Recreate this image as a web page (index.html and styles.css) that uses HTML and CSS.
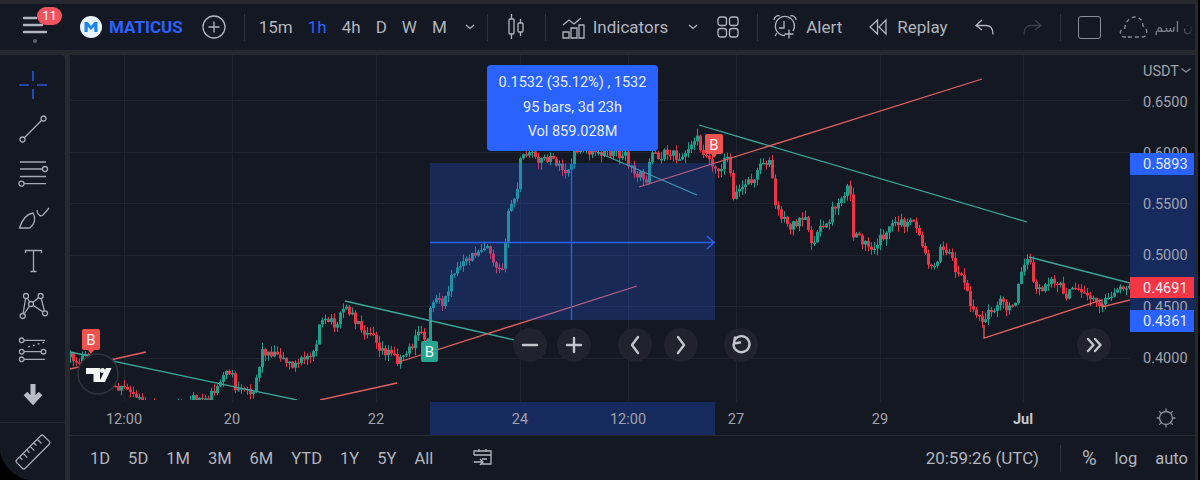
FILE: index.html
```html
<!DOCTYPE html>
<html lang="en">
<head>
  <meta charset="UTF-8">
  <meta name="viewport" content="width=device-width, initial-scale=1.0">
  <title>MATICUS Chart</title>
  <link rel="stylesheet" href="styles.css">
</head>
<body>
<div class="app">
  <header class="topbar">
    <div class="menu">
      <svg class="menu-icon" width="30" height="34" viewBox="0 0 30 34"><path d="M2 3h12M2 10h18M2 17h22" /><circle cx="13" cy="26" r="2" /></svg>
      <span class="badge">11</span>
    </div>
    <div class="symbol">
      <svg width="22" height="22" viewBox="0 0 22 22"><circle cx="11" cy="11" r="11" fill="#e9f1fb" /><path d="M4.5 16V6h3.2L11 10l3.3-4h3.2v10h-3.2V10.5L11 14l-3.300-3.500V16z" fill="#1c86e6" /></svg>
      <span class="symbol-name">MATICUS</span>
    </div>
    <svg class="icon plus" width="24" height="24" viewBox="0 0 24 24"><circle cx="12" cy="12" r="11" /><path d="M12 6.500v11M6.500 12h11" /></svg>
    <span class="sep first-sep"></span>
    <div class="intervals">
      <span>15m</span>
      <span class="active">1h</span>
      <span>4h</span>
      <span>D</span>
      <span>W</span>
      <span>M</span>
    </div>
    <svg class="icon chev interval-chev" width="12" height="8" viewBox="0 0 12 8"><path d="M2 2l4 3.500L10 2" /></svg>
    <span class="sep chev-sep"></span>
    <svg class="icon candle-icon" width="20" height="28" viewBox="0 0 20 28"><rect x="3" y="6" width="5" height="15" rx="1" /><path d="M5.500 1v5M5.500 21v5M14.500 6v4M14.500 19v4" /><rect x="12" y="10" width="5" height="9" rx="1" /></svg>
    <span class="sep candle-sep"></span>
    <svg class="icon ind-icon" width="24" height="24" viewBox="0 0 24 24"><path d="M1 10l6-5 5 4 7-6M1 23v-6h6v6zM9 23V13h6v10zM17 23V10h5v13z" /></svg>
    <span class="tb-text ind-text">Indicators</span>
    <svg class="icon chev ind-chev" width="12" height="8" viewBox="0 0 12 8"><path d="M2 2l4 3.500L10 2" /></svg>
    <svg class="icon grid-icon" width="22" height="22" viewBox="0 0 22 22"><rect x="1" y="1" width="8.500" height="8.500" rx="2.500" /><rect x="12.500" y="1" width="8.500" height="8.500" rx="2.500" /><rect x="1" y="12.500" width="8.500" height="8.500" rx="2.500" /><rect x="12.500" y="12.500" width="8.500" height="8.500" rx="2.500" /></svg>
    <span class="sep grid-sep"></span>
    <svg class="icon alert-icon" width="26" height="26" viewBox="0 0 26 26"><path d="M13 21.500a9.500 9.500 0 1 1 8-4.500M12 7v7H7M2 6c0-3 3-5 6-4M24 6c0-3-3-5-6-4M5 19l-2 3M17 24.500v-9M12.500 20h9" /></svg>
    <span class="tb-text alert-text">Alert</span>
    <svg class="icon replay-icon" width="20" height="20" viewBox="0 0 20 20"><path d="M9.500 3L2 10l7.500 7zM18 3l-7 7 7 7z" /></svg>
    <span class="tb-text replay-text">Replay</span>
    <svg class="icon undo" width="22" height="20" viewBox="0 0 22 20"><path d="M8 3L2 8.500 8 13M2 8.500h10c4 0 7 3 7 9" /></svg>
    <svg class="icon redo" width="22" height="20" viewBox="0 0 22 20"><path d="M14 3l6 5.500L14 13M20 8.500H10c-4 0-7 3-7 9" /></svg>
    <span class="sep redo-sep"></span>
    <span class="square"></span>
    <svg class="icon cloud" width="30" height="24" viewBox="0 0 30 24"><path d="M7 22H5c-5-1-5-8 1-9 0-7 6-11 10-11s8 3 8 9c5 2 5 10 0 11z" stroke-dasharray="4 3" /></svg>
    <div class="layout-name"><span dir="rtl">بدون اسم</span></div>
  </header>

  <div class="main">
    <nav class="sidebar">
      <div class="tool crosshair"><svg width="30" height="30" viewBox="0 0 30 30"><path d="M15 1v10M15 19v10M1 15h10M19 15h10" /></svg></div>
      <div class="tool"><svg width="30" height="30" viewBox="0 0 30 30"><circle cx="4.500" cy="25.500" r="2.500" /><circle cx="25.500" cy="4.500" r="2.500" /><path d="M6.300 23.700L23.700 6.300" /></svg></div>
      <div class="tool"><svg width="30" height="30" viewBox="0 0 30 30"><path d="M2 4h26M2 11h22M2 18.500h26M6 25.700h22" /><circle cx="27" cy="11" r="2.500" /><circle cx="3.500" cy="25.700" r="2.500" /></svg></div>
      <div class="tool"><svg width="30" height="30" viewBox="0 0 30 30"><path d="M1.500 26C4 18 9 12 15 11c3 5 2 11-3 15zM19 8c0 5 4 7 6 5l6-7" /></svg></div>
      <div class="tool"><svg width="30" height="30" viewBox="0 0 30 30"><path d="M7.500 7V4.500h16V7M15.500 4.500v21M12.500 25.500h6" /></svg></div>
      <div class="tool"><svg width="30" height="30" viewBox="0 0 30 30"><path d="M4.700 26L8 6l5 8 9.600-8L27 23.300 13 14 4.700 26" /><circle class="dot" cx="4.700" cy="26" r="2.500" /><circle class="dot" cx="8" cy="6" r="2.500" /><circle class="dot" cx="22.600" cy="6" r="2.500" /><circle class="dot" cx="27" cy="23.300" r="2.500" /><circle class="dot" cx="13" cy="14" r="2.500" /></svg></div>
      <div class="tool"><svg width="30" height="30" viewBox="0 0 30 30"><path d="M6 6.300h21M6 17.700h18M6 25.300h21" /><path d="M10 13l17-5" stroke-dasharray="2 3" /><circle cx="3.700" cy="6.300" r="2.300" /><circle cx="3.700" cy="17.700" r="2.300" /><circle cx="3.700" cy="25.300" r="2.300" /><circle cx="25.500" cy="17.700" r="2.300" /></svg></div>
      <div class="tool arrow"><svg width="30" height="30" viewBox="0 0 30 30"><path d="M15 6v16M7.500 15.500l7.500 8 7.500-8" /></svg></div>
      <div class="tool ruler"><svg width="30" height="30" viewBox="0 0 30 30"><g transform="rotate(-45 15 15)"><rect x="-4" y="9" width="38" height="12" rx="2" /><path d="M2 9v4M7 9v6M12 9v4M17 9v6M22 9v4M27 9v6" /></g></svg></div>
    </nav>

    <div class="content">
      <div class="chart">
        <svg class="chart-svg" width="1125" height="380" viewBox="70 55 1125 380">
          <defs>
            <clipPath id="pane"><rect x="70" y="55" width="1060" height="345" /></clipPath>
          </defs>
          <path class="grid" d="M70 100h1060M70 152h1060M70 203h1060M70 255h1060M70 306h1060M70 358h1060M124 55v347M232 55v347M376 55v347M520 55v347M628 55v347M736 55v347M880 55v347M1023 55v347" />
          <g id="candles" clip-path="url(#pane)"></g>
          <g clip-path="url(#pane)">
            <path class="trend-teal" d="M70 352L297 400M345 301L523 342M597 152L697 195M699 125L1027 222M1029 257L1130 283" />
            <path class="trend-red" d="M70 369L146 352M320 400L397 383M399 362L637 286M639 187L982 79M984 325V338L1102 300V307L1130 300" />
          </g>
          <rect class="sel" x="430" y="163" width="285" height="157" />
          <path class="sel-line" d="M571.500 163v157M430 242.500h284M707 236l7 6.500-7 6.500" />

          <!-- axis selection -->
          <rect class="axis-sel" x="430" y="402" width="285" height="33" />
          <rect class="axis-sel" x="1130" y="175" width="65" height="135" />

          <!-- time axis -->
          <g class="axis-text" text-anchor="middle">
            <text x="124" y="424">12:00</text>
            <text x="232" y="424">20</text>
            <text x="376" y="424">22</text>
            <text x="520" y="424">24</text>
            <text x="628" y="424">12:00</text>
            <text x="736" y="424">27</text>
            <text x="880" y="424">29</text>
            <text class="bold" x="1023" y="424">Jul</text>
          </g>

          <!-- price axis -->
          <g class="axis-text">
            <text x="1143" y="76">USDT</text>
            <text x="1143" y="107">0.6500</text>
            <text x="1143" y="158">0.6000</text>
            <text x="1143" y="209">0.5500</text>
            <text x="1143" y="260">0.5000</text>
            <text x="1143" y="312">0.4500</text>
            <text x="1143" y="363">0.4000</text>
          </g>
          <path class="btn-icon thin" d="M1182 69l4 3 4-3" />
          <rect class="price-blue" x="1130" y="153" width="64" height="22" />
          <rect class="price-blue" x="1130" y="310" width="64" height="22" />
          <rect class="price-red" x="1130" y="277" width="64" height="21" />
          <g class="price-text">
            <text x="1143" y="169">0.5893</text>
            <text x="1143" y="293">0.4691</text>
            <text x="1143" y="326">0.4361</text>
          </g>

          <!-- sun -->
          <g class="btn-icon thin">
            <circle cx="1166" cy="418" r="6.500" />
            <path d="M1166 409v2.500M1166 424.500v2.500M1157 418h2.500M1172.500 418h2.500M1159.600 411.600l1.800 1.800M1170.600 422.600l1.800 1.800M1172.400 411.600l-1.800 1.800M1161.400 422.600l-1.800 1.800" />
          </g>

          <!-- signal markers -->
          <path class="mark-red" d="M84 329h14a2 2 0 0 1 2 2v17a2 2 0 0 1-2 2h-4l-3 4-3-4h-4a2 2 0 0 1-2-2v-17a2 2 0 0 1 2-2z" />
          <path class="mark-red" d="M707 134h14a2 2 0 0 1 2 2v16a2 2 0 0 1-2 2h-4l-3 4-3-4h-4a2 2 0 0 1-2-2v-16a2 2 0 0 1 2-2z" />
          <path class="mark-teal" d="M429.500 337l3 4h3.500a2 2 0 0 1 2 2v17a2 2 0 0 1-2 2h-13a2 2 0 0 1-2-2v-17a2 2 0 0 1 2-2h3.500z" />
          <g class="mark-text" text-anchor="middle">
            <text x="91" y="345">B</text>
            <text x="714" y="150">B</text>
            <text x="429.500" y="357">B</text>
          </g>

          <!-- logo -->
          <circle class="logo-bg" cx="98" cy="374" r="20" />
          <path class="logo-mark" d="M86 368h14v14h-6.500v-8H86zM106 368h5.500L105 382h-6z" />
          <circle class="logo-mark" cx="102.500" cy="370.500" r="2.500" />

          <!-- floating buttons -->
          <g class="fab">
            <circle cx="530" cy="345" r="17" />
            <circle cx="574" cy="345" r="17" />
            <circle cx="635" cy="345" r="17" />
            <circle cx="681" cy="345" r="17" />
            <circle cx="741" cy="345" r="17" />
            <circle cx="1094" cy="345" r="17" />
          </g>
          <g class="btn-icon">
            <path d="M523 345h14M567 345h14M574 338v14M638 337l-6 8 6 8M678 337l6 8-6 8" />
            <path d="M735 337.500l-1 6 6-1M735 339.500a8 8 0 1 1-1.500 5" />
            <path d="M1088 339l5.500 6-5.500 6M1095 339l5.500 6-5.500 6" />
          </g>
        </svg>
        <div class="tooltip">
          <div>0.1532 (35.12%) , 1532</div>
          <div>95 bars, 3d 23h</div>
          <div>Vol 859.028M</div>
        </div>
      </div>

      <footer class="bottombar">
        <div class="ranges">
          <span>1D</span>
          <span>5D</span>
          <span>1M</span>
          <span>3M</span>
          <span>6M</span>
          <span>YTD</span>
          <span>1Y</span>
          <span>5Y</span>
          <span>All</span>
        </div>
        <svg class="icon range-icon" width="22" height="20" viewBox="0 0 22 20"><path d="M1 7V3h17v13H8M1 7h17M6 1v3M13 1v3M1 14h9M7 11l3 3-3 3M14 11H9" /></svg>
        <div class="status">
          <span class="clock">20:59:26 (UTC)</span>
          <span class="sep"></span>
          <span class="pct">%</span>
          <span>log</span>
          <span>auto</span>
        </div>
      </footer>
    </div>
  </div>
</div>
<script src="chart.js"></script>
</body>
</html>
```
FILE: styles.css
```css
* {
  box-sizing: border-box;
}
body {
  margin: 0;
  background-color: #000;
  font-family: Roboto, "DejaVu Sans", sans-serif;
  color: #b2b5be;
  overflow: hidden;
}
.app {
  width: 1198px;
  height: 480px;
  padding: 4px 3px 0 0;
  background-color: #25282f;
  border-bottom-left-radius: 34px;
  overflow: hidden;
}

/* top bar */
.topbar {
  display: flex;
  align-items: center;
  height: 46px;
  background-color: #141822;
  font-size: 17px;
  white-space: nowrap;
}
.menu {
  position: relative;
  width: 77px;
  height: 46px;
  margin-left: 3px;
  flex: none;
}
.menu-icon {
  position: absolute;
  left: 19px;
  top: 11px;
}
.menu-icon path {
  stroke: #b2b5be;
  stroke-width: 2.4;
  stroke-linecap: round;
  fill: none;
}
.menu-icon circle {
  fill: #5d6069;
}
.badge {
  position: absolute;
  left: 34px;
  top: 3px;
  width: 25px;
  height: 18px;
  border-radius: 9px;
  background-color: #f0525f;
  color: #fff;
  font-size: 13px;
  line-height: 18px;
  text-align: center;
}
.symbol {
  display: flex;
  align-items: center;
  gap: 7px;
}
.symbol-name {
  color: #2962ff;
  font-size: 17px;
  font-weight: 700;
}
.icon {
  flex: none;
  fill: none;
  stroke: #b2b5be;
  stroke-width: 1.300;
}
.plus {
  margin-left: 19px;
}
.sep {
  flex: none;
  width: 1px;
  height: 27px;
  background-color: #2f323b;
}
.first-sep {
  margin-left: 18px;
}
.intervals {
  display: flex;
  gap: 15px;
  margin-left: 14px;
}
.intervals .active {
  color: #2962ff;
}
.interval-chev {
  margin-left: 17px;
}
.chev-sep {
  margin-left: 11px;
}
.candle-icon {
  margin-left: 18px;
}
.candle-sep {
  margin-left: 19px;
}
.ind-icon {
  margin-left: 16px;
}
.ind-text {
  margin-left: 7px;
}
.ind-chev {
  margin-left: 19px;
}
.grid-icon {
  margin-left: 18px;
}
.grid-sep {
  margin-left: 18px;
}
.alert-icon {
  margin-left: 14px;
}
.alert-text {
  margin-left: 8px;
}
.replay-icon {
  margin-left: 26px;
}
.replay-text {
  margin-left: 9px;
}
.undo {
  margin-left: 26px;
}
.redo {
  margin-left: 25px;
  stroke: #3c3f48;
}
.redo-sep {
  margin-left: 17px;
}
.square {
  flex: none;
  width: 23px;
  height: 23px;
  margin-left: 17px;
  border: 1.500px solid #8a8d96;
  border-radius: 3px;
}
.cloud {
  margin-left: 18px;
  stroke: #8a8d96;
}
.layout-name {
  width: 42px;
  margin-left: 6px;
  overflow: hidden;
  font-size: 14px;
  color: #7d808a;
  -webkit-mask-image: linear-gradient(to right, #000 55%, transparent);
  mask-image: linear-gradient(to right, #000 55%, transparent);
}

/* left tools */
.main {
  display: flex;
  gap: 5px;
  height: 425px;
  margin-top: 5px;
}
.sidebar {
  display: flex;
  flex-direction: column;
  flex: none;
  width: 65px;
  padding-top: 8px;
  background-color: #141822;
  border-top-right-radius: 4px;
}
.tool {
  display: flex;
  align-items: center;
  justify-content: center;
  flex: none;
  height: 44px;
}
.tool svg {
  overflow: visible;
  fill: none;
  stroke: #a6a9b3;
  stroke-width: 1.300;
}
.tool .dot {
  fill: #141822;
}
.crosshair svg {
  stroke: #2458d8;
  stroke-width: 1.600;
}
.arrow svg {
  stroke: #b9bcc5;
  stroke-width: 5;
}
.ruler {
  height: 58px;
  margin-top: 7px;
  border-top: 1px solid #25282f;
}

/* chart */
.content {
  display: flex;
  flex-direction: column;
  flex: 1;
  min-width: 0;
}
.chart {
  position: relative;
  height: 380px;
  background-color: #141822;
}
.chart-svg {
  display: block;
}
.grid {
  stroke: #1f232e;
  stroke-width: 1;
  fill: none;
  shape-rendering: crispEdges;
}
.trend-teal {
  stroke: #3aa899;
  stroke-width: 1.300;
  fill: none;
}
.trend-red {
  stroke: #e2605f;
  stroke-width: 1.300;
  fill: none;
}
.sel {
  fill: #2962ff;
  fill-opacity: 0.24;
}
.sel-line {
  stroke: #2962ff;
  stroke-width: 1.300;
  fill: none;
}
.axis-sel {
  fill: #172a5e;
}
.axis-text text {
  fill: #a0a3ad;
  font-size: 14.500px;
}
.axis-text .bold {
  font-weight: 700;
  fill: #c4c6cd;
}
.price-blue {
  fill: #2962ff;
}
.price-red {
  fill: #f23645;
}
.price-text text {
  fill: #e8ecf5;
  font-size: 14.500px;
}
.mark-red {
  fill: #f0524f;
}
.mark-teal {
  fill: #26a492;
}
.mark-text text {
  fill: #f2f2f2;
  font-size: 15px;
}
.logo-bg {
  fill: #141822;
  stroke: #30333c;
  stroke-width: 1.500;
}
.logo-mark {
  fill: #f4f4f4;
}
.fab circle {
  fill: #20232d;
}
.btn-icon {
  stroke: #c3c5cc;
  stroke-width: 2.400;
  stroke-linecap: round;
  stroke-linejoin: round;
  fill: none;
}
.btn-icon.thin {
  stroke: #8d9099;
  stroke-width: 1.300;
}
.tooltip {
  position: absolute;
  left: 417px;
  top: 10px;
  width: 171px;
  height: 86px;
  padding: 6px 0;
  background-color: #2962ff;
  border-radius: 4px;
  color: #e8edf8;
  font-size: 14.500px;
  line-height: 24.500px;
  text-align: center;
}

/* bottom bar */
.bottombar {
  display: flex;
  align-items: center;
  height: 44px;
  margin-top: 1px;
  padding: 0 7px 0 20px;
  background-color: #141822;
  font-size: 16.500px;
  white-space: nowrap;
}
.ranges {
  display: flex;
  gap: 18px;
}
.range-icon {
  margin-left: 40px;
}
.status {
  display: flex;
  align-items: center;
  gap: 18px;
  margin-left: auto;
}
.status .sep {
  margin: 0 3px;
}
.clock {
  font-size: 17px;
}
.pct {
  font-size: 20px;
}
```
FILE: chart.js
```js
// close price path of the candles, as page x / y
const path = [
  [70,357],[78,360],[90,358],[105,380],[112,388],[122,390],[132,394],[137,398],[146,405],[165,412],[185,403],
  [190,400],[198,399],[207,397],[215,390],[220,378],[228,373],[232,372],[235,392],[243,393],[253,388],[258,370],
  [262,352],[277,352],[287,363],[297,365],[307,355],[315,347],[318,325],[327,322],[337,323],[343,308],[350,312],
  [362,330],[372,330],[380,348],[393,355],[398,360],[407,350],[413,345],[418,332],[428,340],[431,298],[436,298],
  [442,302],[447,300],[449,275],[452,270],[460,268],[470,258],[480,248],[487,244],[490,250],[494,262],[498,266],
  [504,263],[507,215],[510,205],[517,192],[520,160],[525,155],[535,155],[540,160],[548,160],[555,160],[560,170],
  [565,172],[572,165],[575,150],[585,150],[605,152],[625,155],[630,168],[640,175],[645,182],[648,170],[652,155],
  [660,155],[670,153],[680,160],[688,150],[695,135],[697,140],[705,155],[715,165],[720,172],[725,150],[730,170],
  [733,195],[745,185],[755,178],[762,160],[770,162],[775,205],[788,227],[795,222],[805,222],[810,243],[820,230],
  [828,220],[835,205],[847,187],[852,195],[853,237],[860,240],[873,247],[885,232],[892,227],[905,222],[917,227],
  [927,263],[935,262],[940,250],[950,255],[957,273],[965,280],[970,305],[978,318],[983,323],[990,310],[1000,303],
  [1013,310],[1018,280],[1023,260],[1030,265],[1033,285],[1040,290],[1048,285],[1055,280],[1065,295],[1075,290],
  [1085,295],[1095,298],[1100,305],[1105,302],[1115,295],[1125,285],[1130,283]
];

let seed = 17;
function rnd() {
  seed = (seed * 16807) % 2147483647;
  return seed / 2147483647;
}

function closeAt(x) {
  for (let i = 1; i < path.length; i++) {
    if (x <= path[i][0]) {
      const a = path[i - 1];
      const b = path[i];
      return a[1] + (b[1] - a[1]) * (x - a[0]) / (b[0] - a[0]);
    }
  }
  return path[path.length - 1][1];
}

let out = "";
let prev = closeAt(70);
for (let x = 70; x <= 1130; x += 3) {
  const close = closeAt(x) + (rnd() - 0.5) * 10;
  const top = Math.min(prev, close);
  const bottom = Math.max(prev, close);
  const color = close < prev ? "#1f9e8b" : "#ea3548";
  const high = top - rnd() * 7;
  const low = bottom + rnd() * 7;
  out += `<path d="M${x + 0.5} ${high.toFixed(1)}V${low.toFixed(1)}" stroke="${color}" stroke-width="1"/>`;
  out += `<rect x="${x - 1}" y="${top.toFixed(1)}" width="3" height="${Math.max(bottom - top, 1.5).toFixed(1)}" fill="${color}"/>`;
  prev = close;
}
document.getElementById("candles").innerHTML = out;
```
